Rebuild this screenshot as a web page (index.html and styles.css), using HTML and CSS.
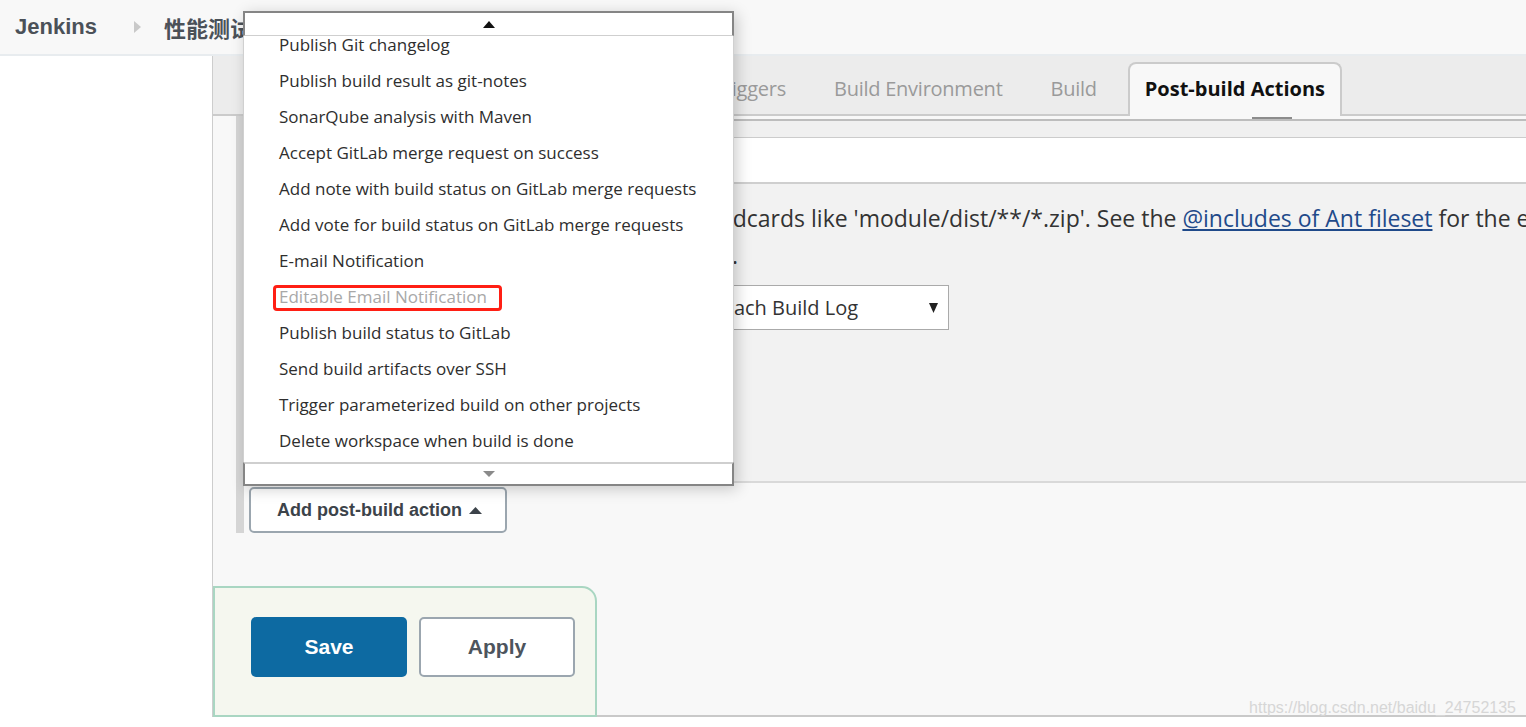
FILE: index.html
```html
<!DOCTYPE html>
<html lang="zh-CN">
<head>
<meta charset="utf-8">
<title>性能测试 Config [Jenkins]</title>
<link rel="stylesheet" href="styles.css">
</head>
<body>
<div class="page">
  <header class="topbar">
    <a class="brand">Jenkins</a>
    <svg class="crumb-arrow" width="7" height="12" viewBox="0 0 7 12"><path d="M0 0 L7 6 L0 12 Z" fill="#c9c9c9"/></svg>
    <a class="crumb">性能测试</a>
  </header>
  <div class="layout">
    <aside class="sidebar"></aside>
    <main class="main">
      <nav class="tabbar">
        <span class="tab">General</span>
        <span class="tab">Source Code Management</span>
        <span class="tab">Build Triggers</span>
        <span class="tab">Build Environment</span>
        <span class="tab">Build</span>
        <span class="tab active">Post-build Actions<span class="tab-mark"></span></span>
      </nav>
      <div class="config">
        <div class="cfg-head"></div>
        <div class="cfg-row"></div>
        <div class="cfg-section">
          <p class="help">Can use wildcards like 'module/dist/**/*.zip'. See the <a class="help-link">@includes of Ant fileset</a> for the exact format. The base directory is the workspace.</p>
          <p class="help help-cont">workspace.</p>
          <div class="select">
            <span class="select-text">Attach Build Log</span>
            <svg class="select-caret" width="9" height="10" viewBox="0 0 9 10"><path d="M0 0 H9 L4.5 10 Z" fill="#222"/></svg>
          </div>
        </div>
        <button class="add-btn">Add post-build action
          <svg class="add-caret" width="13" height="7" viewBox="0 0 13 7"><path d="M0 7 L6.5 0 L13 7 Z" fill="#3c434a"/></svg>
        </button>
      </div>
      <div class="bottom-bar">
        <button class="btn btn-save">Save</button>
        <button class="btn btn-apply">Apply</button>
      </div>
    </main>
  </div>

  <div class="menu">
    <div class="menu-scroll up">
      <svg width="12" height="7" viewBox="0 0 12 7"><path d="M0 7 L6 0 L12 7 Z" fill="#111"/></svg>
    </div>
    <div class="menu-list">
      <ul class="menu-items">
        <li>Publish Git changelog</li>
        <li>Publish build result as git-notes</li>
        <li>SonarQube analysis with Maven</li>
        <li>Accept GitLab merge request on success</li>
        <li>Add note with build status on GitLab merge requests</li>
        <li>Add vote for build status on GitLab merge requests</li>
        <li>E-mail Notification</li>
        <li class="disabled">Editable Email Notification<span class="mark-box"></span></li>
        <li>Publish build status to GitLab</li>
        <li>Send build artifacts over SSH</li>
        <li>Trigger parameterized build on other projects</li>
        <li>Delete workspace when build is done</li>
      </ul>
    </div>
    <div class="menu-scroll down">
      <svg width="12" height="6" viewBox="0 0 12 6"><path d="M0 0 L12 0 L6 6 Z" fill="#8a8a8a"/></svg>
    </div>
  </div>

  <div class="watermark">https://blog.csdn.net/baidu_24752135</div>
</div>
</body>
</html>
```

FILE: styles.css
```css
* { box-sizing: border-box; }

html, body {
  margin: 0;
  padding: 0;
  width: 1526px;
  height: 727px;
  overflow: hidden;
  background: #fff;
}

body {
  font-family: "Open Sans", "Noto Sans", sans-serif;
  color: #333;
}

.page {
  position: relative;
  height: 727px;
  display: flex;
  flex-direction: column;
}

/* ---------- header ---------- */
.topbar {
  flex: none;
  height: 56px;
  background: #f8f8f8;
  border-bottom: 2px solid #e8ecef;
  display: flex;
  align-items: center;
  padding-left: 15px;
}

.brand {
  font: bold 22px "Liberation Sans", Arial, sans-serif;
  color: #4b5158;
}

.crumb-arrow {
  margin-left: 37px;
}

.crumb {
  margin-left: 23px;
  font: bold 22px "Noto Sans CJK SC", "Liberation Sans", sans-serif;
  color: #4b5158;
}

/* ---------- layout ---------- */
.layout {
  flex: none;
  height: 661px;
  display: flex;
}

.sidebar {
  flex: none;
  width: 212px;
  background: #fff;
}

.main {
  flex: 1;
  min-width: 0;
  display: flex;
  flex-direction: column;
  background: #f8f8f8;
  border-left: 1px solid #cdcdcd;
  border-bottom: 2px solid #c9c9c9;
}

/* ---------- tabs ---------- */
.tabbar {
  flex: none;
  height: 60px;
  background: #ececec;
  border-bottom: 2px solid #cbcbcb;
  display: flex;
  align-items: flex-end;
  justify-content: flex-end;
  padding-right: 184px;
}

.tab {
  height: 54px;
  margin-bottom: -2px;
  margin-left: 14px;
  padding: 0 15px 3px;
  border: 2px solid transparent;
  border-bottom: none;
  display: flex;
  align-items: center;
  font-size: 20px;
  letter-spacing: -0.25px;
  color: #9a9a9a;
  white-space: nowrap;
}

.tab.active {
  position: relative;
  background: #f8f8f8;
  border-color: #cbcbcb;
  border-radius: 8px 8px 0 0;
  color: #111;
  font-weight: 700;
  letter-spacing: 0;
}

.tab-mark {
  position: absolute;
  left: 122px;
  bottom: -3px;
  width: 40px;
  height: 2px;
  background: #8c8c8c;
}

/* ---------- config ---------- */
.config {
  flex: none;
  margin-left: 23px;
  border-left: 8px solid #d5d5d5;
  display: flex;
  flex-direction: column;
  align-items: flex-start;
}

.cfg-head {
  align-self: stretch;
  margin-top: 3px;
  height: 19px;
  background: #f0f0f0;
  border-top: 2px solid #bdbdbd;
  border-bottom: 1px solid #cccccc;
}

.cfg-row {
  align-self: stretch;
  height: 46px;
  background: #fff;
  border-bottom: 2px solid #cfcfcf;
}

.cfg-section {
  align-self: stretch;
  height: 299px;
  background: #f2f2f2;
  border-bottom: 2px solid #d9d9d9;
  padding-top: 16px;
}

.help {
  margin: 0;
  padding-left: 368px;
  font-size: 23px;
  line-height: 37px;
  color: #333;
  white-space: nowrap;
}

.help-cont {
  text-indent: 5px;
}

.help-link {
  color: #1f4a8a;
  text-decoration: underline;
}

.select {
  margin: 11px 0 0 453px;
  width: 252px;
  height: 45px;
  background: #fff;
  border: 1px solid #aaaaaa;
  display: flex;
  align-items: center;
  justify-content: space-between;
  padding: 0 10px 0 9px;
}

.select-text {
  font-size: 20px;
  color: #333;
  white-space: nowrap;
}

.add-btn {
  margin: 4px 0 0 5px;
  width: 258px;
  height: 46px;
  background: #fff;
  border: 2px solid #9ba6af;
  border-radius: 5px;
  padding: 0 0 0 26px;
  display: flex;
  align-items: center;
  gap: 7px;
  font: bold 18px "Liberation Sans", Arial, sans-serif;
  color: #3c434a;
}

/* ---------- bottom bar ---------- */
.bottom-bar {
  margin-top: auto;
  margin-bottom: -2px;
  width: 384px;
  height: 131px;
  background: #f5f7ef;
  border: 2px solid #a9d6c2;
  border-radius: 0 15px 0 0;
  padding: 29px 0 0 36px;
  display: flex;
  align-items: flex-start;
  gap: 12px;
}

.btn {
  width: 156px;
  height: 60px;
  border-radius: 5px;
  font: bold 21px "Liberation Sans", Arial, sans-serif;
}

.btn-save {
  background: #0d6aa2;
  border: none;
  color: #fff;
}

.btn-apply {
  background: #fff;
  border: 2px solid #9ba6af;
  color: #4d545d;
}

/* ---------- dropdown menu overlay ---------- */
.menu {
  position: absolute;
  left: 243px;
  top: 11px;
  width: 491px;
  background: #fff;
  box-shadow: 3px 3px 14px rgba(0, 0, 0, 0.2);
}

.menu-scroll {
  display: flex;
  justify-content: center;
  align-items: center;
  background: #fff;
  border: 2px solid #858585;
}

.menu-scroll.up {
  height: 25px;
  border-bottom: 1px solid #cfcfcf;
}

.menu-scroll.down {
  height: 24px;
  border-top: 2px solid #cfcfcf;
}

.menu-list {
  height: 426px;
  overflow: hidden;
  border-left: 1px solid #d0d0d0;
  border-right: 1px solid #d0d0d0;
}

.menu-items {
  list-style: none;
  margin: -9px 0 0 0;
  padding: 0;
}

.menu-items li {
  position: relative;
  height: 36px;
  line-height: 36px;
  padding-left: 35px;
  font-size: 17px;
  color: #2e2e2e;
  white-space: nowrap;
}

.menu-items li.disabled {
  color: #a8a8a8;
}

.mark-box {
  position: absolute;
  left: 29px;
  top: 6px;
  width: 229px;
  height: 26px;
  border: 3px solid #ff1f14;
  border-radius: 4px;
}

/* ---------- watermark ---------- */
.watermark {
  position: absolute;
  right: 10px;
  top: 699px;
  font: 16px "Liberation Sans", Arial, sans-serif;
  line-height: 18px;
  color: #d6d6d6;
}
```
